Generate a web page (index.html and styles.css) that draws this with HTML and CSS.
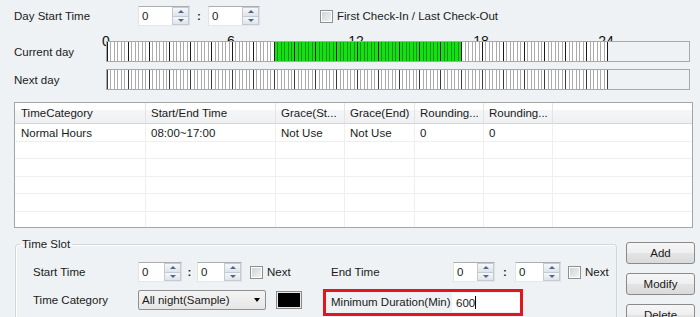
FILE: index.html
```html
<!DOCTYPE html>
<html lang="en">

<head>
    <meta charset="UTF-8">
    <title>Time Slot Settings</title>
    <link rel="stylesheet" href="styles.css">
</head>

<body>
    <!-- Day start -->
    <div class="top-row">
        <span class="field-label">Day Start Time</span>
        <div class="spin w52">
            <span class="spin-val">0</span>
            <span class="spin-btns"><span class="up"></span><span class="down"></span></span>
        </div>
        <span class="colon w18">:</span>
        <div class="spin w52">
            <span class="spin-val">0</span>
            <span class="spin-btns"><span class="up"></span><span class="down"></span></span>
        </div>
        <span class="check first-check"></span>
        <span class="check-text">First Check-In / Last Check-Out</span>
    </div>

    <!-- Timeline -->
    <div class="scale">
        <span>0</span><span>6</span><span>12</span><span>18</span><span>24</span>
    </div>
    <div class="day-row">
        <span class="day-label">Current day</span>
        <div class="bar bar-filled"></div>
    </div>
    <div class="day-row next">
        <span class="day-label">Next day</span>
        <div class="bar"></div>
    </div>

    <!-- List -->
    <div class="list">
        <table>
            <thead>
                <tr>
                    <th class="c1">TimeCategory</th>
                    <th class="c2">Start/End Time</th>
                    <th class="c3">Grace(St...</th>
                    <th class="c4">Grace(End)</th>
                    <th class="c5">Rounding...</th>
                    <th class="c6">Rounding...</th>
                    <th class="c7"></th>
                </tr>
            </thead>
            <tbody>
                <tr>
                    <td>Normal Hours</td>
                    <td>08:00~17:00</td>
                    <td>Not Use</td>
                    <td>Not Use</td>
                    <td>0</td>
                    <td>0</td>
                    <td></td>
                </tr>
                <tr><td></td><td></td><td></td><td></td><td></td><td></td><td></td></tr>
                <tr><td></td><td></td><td></td><td></td><td></td><td></td><td></td></tr>
                <tr><td></td><td></td><td></td><td></td><td></td><td></td><td></td></tr>
                <tr><td></td><td></td><td></td><td></td><td></td><td></td><td></td></tr>
                <tr><td></td><td></td><td></td><td></td><td></td><td></td><td></td></tr>
            </tbody>
        </table>
    </div>

    <!-- Time slot editor -->
    <div class="bottom">
        <fieldset class="slot">
            <legend>Time Slot</legend>
            <div class="slot-row">
                <div class="half-left">
                    <span class="slot-label">Start Time</span>
                    <div class="spin w44">
                        <span class="spin-val">0</span>
                        <span class="spin-btns"><span class="up"></span><span class="down"></span></span>
                    </div>
                    <span class="colon w15">:</span>
                    <div class="spin w45">
                        <span class="spin-val">0</span>
                        <span class="spin-btns"><span class="up"></span><span class="down"></span></span>
                    </div>
                    <span class="check next-check"></span>
                    <span class="check-text">Next</span>
                </div>
                <div class="half-right">
                    <span class="end-label">End Time</span>
                    <div class="spin w42">
                        <span class="spin-val">0</span>
                        <span class="spin-btns"><span class="up"></span><span class="down"></span></span>
                    </div>
                    <span class="colon w20">:</span>
                    <div class="spin w46">
                        <span class="spin-val">0</span>
                        <span class="spin-btns"><span class="up"></span><span class="down"></span></span>
                    </div>
                    <span class="check end-check"></span>
                    <span class="check-text">Next</span>
                </div>
            </div>
            <div class="slot-row second">
                <div class="half-left">
                    <span class="slot-label cat-label">Time Category</span>
                    <div class="combo">All night(Sample)</div>
                    <span class="swatch"></span>
                </div>
                <div class="min-box">
                    <span class="min-label">Minimum Duration(Min)</span>
                    <div class="min-input">600<span class="caret"></span></div>
                </div>
            </div>
        </fieldset>

        <div class="buttons">
            <div class="btn">Add</div>
            <div class="btn">Modify</div>
            <div class="btn">Delete</div>
        </div>
    </div>
</body>

</html>
```

FILE: styles.css
```css
body, html {
    margin: 0;
    padding: 0;
    height: 100%;
    overflow: hidden;
}

body {
    background-color: #eef2f4;
    color: #1a1a1a;
    font-family: "Liberation Sans", Arial, sans-serif;
    font-size: 11.5px;
}

/* Top row */
.top-row {
    display: flex;
    align-items: center;
    padding: 6px 0 0 14px;
    height: 20px;
}

.field-label {
    width: 124px;
}

.colon {
    text-align: center;
    font-weight: bold;
}

.w15 { width: 15px; }
.w18 { width: 18px; }
.w20 { width: 20px; }

/* Spinner box */
.spin {
    display: flex;
    box-sizing: border-box;
    height: 20px;
    background: #fff;
    border: 1px solid #abadb3;
    border-color: #abadb3 #dbdfe6 #e3e9ef #e2e3ea;
}

.w42 { width: 42px; }
.w44 { width: 44px; }
.w45 { width: 45px; }
.w46 { width: 46px; }
.w52 { width: 52px; }

.spin-val {
    flex: 1;
    padding-left: 3px;
    line-height: 18px;
}

.spin-btns {
    display: flex;
    flex-direction: column;
    width: 17px;
}

.up, .down {
    flex: 1;
    display: flex;
    align-items: center;
    justify-content: center;
    border: 1px solid #c3cad2;
    background: linear-gradient(#f5f7f9, #dfe4ea);
}

.up { border-bottom: none; }

.up:before,
.down:before {
    content: "";
    border-left: 3px solid transparent;
    border-right: 3px solid transparent;
}

.up:before { border-bottom: 3px solid #4d6590; }
.down:before { border-top: 3px solid #4d6590; }

/* Checkbox */
.check {
    box-sizing: border-box;
    width: 13px;
    height: 13px;
    border: 1px solid #8e8f8f;
    background: linear-gradient(135deg, #cdd0d4, #f5f5f5);
    box-shadow: inset 0 0 0 1px #fff;
}

.first-check { margin-left: 60px; }
.next-check { margin-left: 8px; }
.end-check { margin-left: 7px; }

.check-text {
    margin-left: 4px;
}

/* Timeline */
.scale {
    display: flex;
    margin: 8px 0 0 43.5px;
    height: 7px;
    font-size: 14px;
    line-height: 14px;
    color: #111;
}

.scale span {
    width: 125px;
    text-align: center;
}

.day-row {
    display: flex;
    align-items: center;
    padding-left: 14px;
}

.day-row.next {
    margin-top: 7px;
}

.day-label {
    width: 92px;
}

.bar {
    position: relative;
    box-sizing: border-box;
    width: 584px;
    height: 21px;
    border: 1px solid #a8a8a8;
    background:
        repeating-linear-gradient(90deg, #3a3a3a 0 1px, transparent 1px 20.8333px) 0 0 / 501px 100% no-repeat,
        repeating-linear-gradient(90deg, rgba(0, 0, 0, 0.33) 0 1px, transparent 1px 3.4722px) 0 0 / 501px 100% no-repeat,
        linear-gradient(#fff, #fff) 0 0 / 501px 100% no-repeat,
        #eef2f4;
}

.bar-filled {
    background:
        repeating-linear-gradient(90deg, #1a1a1a 0 1px, transparent 1px 20.8333px) 0 0 / 501px 100% no-repeat,
        repeating-linear-gradient(90deg, rgba(0, 0, 0, 0.33) 0 1px, transparent 1px 3.4722px) 0 0 / 501px 100% no-repeat,
        linear-gradient(90deg, #fff 0 166.67px, #14e014 166.67px 354.17px, #fff 354.17px) 0 0 / 501px 100% no-repeat,
        #eef2f4;
}

/* List */
.list {
    box-sizing: border-box;
    margin: 12px 0 0 14px;
    width: 679px;
    height: 126px;
    border: 1px solid #a5a5a5;
    background: #fff;
    overflow: hidden;
}

.list table {
    border-collapse: separate;
    border-spacing: 0;
    table-layout: fixed;
    width: 100%;
}

.list th {
    box-sizing: border-box;
    height: 21px;
    padding: 0 0 0 5px;
    text-align: left;
    font-weight: normal;
    white-space: nowrap;
    overflow: hidden;
    background: linear-gradient(#fff 0, #fff 35%, #f5f6f8 35%, #eff0f2 100%);
    border-bottom: 1px solid #d5d5d5;
    border-right: 1px solid #e2e4e7;
}

.list th.c7 { border-right: none; }
.list th.c1 { padding-left: 6px; }

.c1 { width: 131px; }
.c2 { width: 130px; }
.c3 { width: 69px; }
.c4 { width: 70px; }
.c5 { width: 69px; }
.c6 { width: 69px; }

.list tbody tr { height: 18px; }
.list tbody tr:nth-child(even) { height: 17px; }

.list td {
    box-sizing: border-box;
    padding: 0 0 0 5px;
    white-space: nowrap;
    border-bottom: 1px solid #efefef;
    border-right: 1px solid #efefef;
}

.list td:first-child { padding-left: 6px; }
.list td:last-child { border-right: none; }

/* Time slot */
.bottom {
    display: flex;
    align-items: flex-start;
    margin-top: 9px;
    padding-left: 15px;
}

.slot {
    box-sizing: border-box;
    margin: 0;
    width: 602px;
    height: 110px;
    min-width: 0;
    padding: 11px 0 0 17px;
    border: 1px solid #cfd8de;
    border-radius: 3px;
    box-shadow: inset 1px 1px 0 #fff;
}

.slot legend {
    margin-left: -13px;
    padding: 0 2px;
    line-height: 14px;
}

.slot-row {
    display: flex;
    align-items: center;
    height: 20px;
}

.slot-row.second {
    align-items: flex-start;
    height: 27px;
    margin-top: 7px;
}

.half-left {
    display: flex;
    align-items: center;
    width: 290px;
}

.second .half-left {
    align-items: flex-start;
}

.half-right {
    display: flex;
    align-items: center;
    padding-left: 8px;
}

.slot-label {
    width: 105px;
}

.cat-label {
    line-height: 20px;
    margin-top: 1px;
}

.end-label {
    width: 122px;
}

.combo {
    box-sizing: border-box;
    display: flex;
    align-items: center;
    width: 128px;
    height: 20px;
    margin-top: 1px;
    padding-left: 3px;
    border: 1px solid #8e8f8f;
    border-radius: 2px;
    background: linear-gradient(#f4f4f4, #e6e6e6);
}

.combo:after {
    content: "";
    margin: 0 5px 0 auto;
    border-top: 4px solid #000;
    border-left: 3.5px solid transparent;
    border-right: 3.5px solid transparent;
}

.swatch {
    box-sizing: border-box;
    width: 26px;
    height: 18px;
    margin: 2px 0 0 10px;
    border: 1px solid #8a8a8a;
    background: #000;
    box-shadow: inset 0 0 0 1px #e9e9e9;
}

.min-box {
    box-sizing: border-box;
    display: flex;
    width: 200px;
    height: 27px;
    padding-left: 5px;
    border: 3px solid #e3161f;
}

.min-label {
    width: 121px;
    line-height: 18px;
    margin-top: 1px;
    white-space: nowrap;
}

.min-input {
    display: flex;
    align-items: center;
    width: 68px;
    height: 19px;
    margin-top: 1px;
    padding-left: 4px;
    box-sizing: border-box;
    background: #fff;
}

.caret {
    width: 1px;
    height: 13px;
    background: #000;
}

/* Buttons */
.buttons {
    display: flex;
    flex-direction: column;
    gap: 9px;
    margin: 5px 0 0 9px;
}

.btn {
    box-sizing: border-box;
    width: 69px;
    height: 22px;
    line-height: 20px;
    text-align: center;
    border: 1px solid #8a8a8a;
    border-radius: 3px;
    background: linear-gradient(#f6f6f6 0, #efefef 50%, #e4e4e4 50%, #dadada 100%);
}
```
